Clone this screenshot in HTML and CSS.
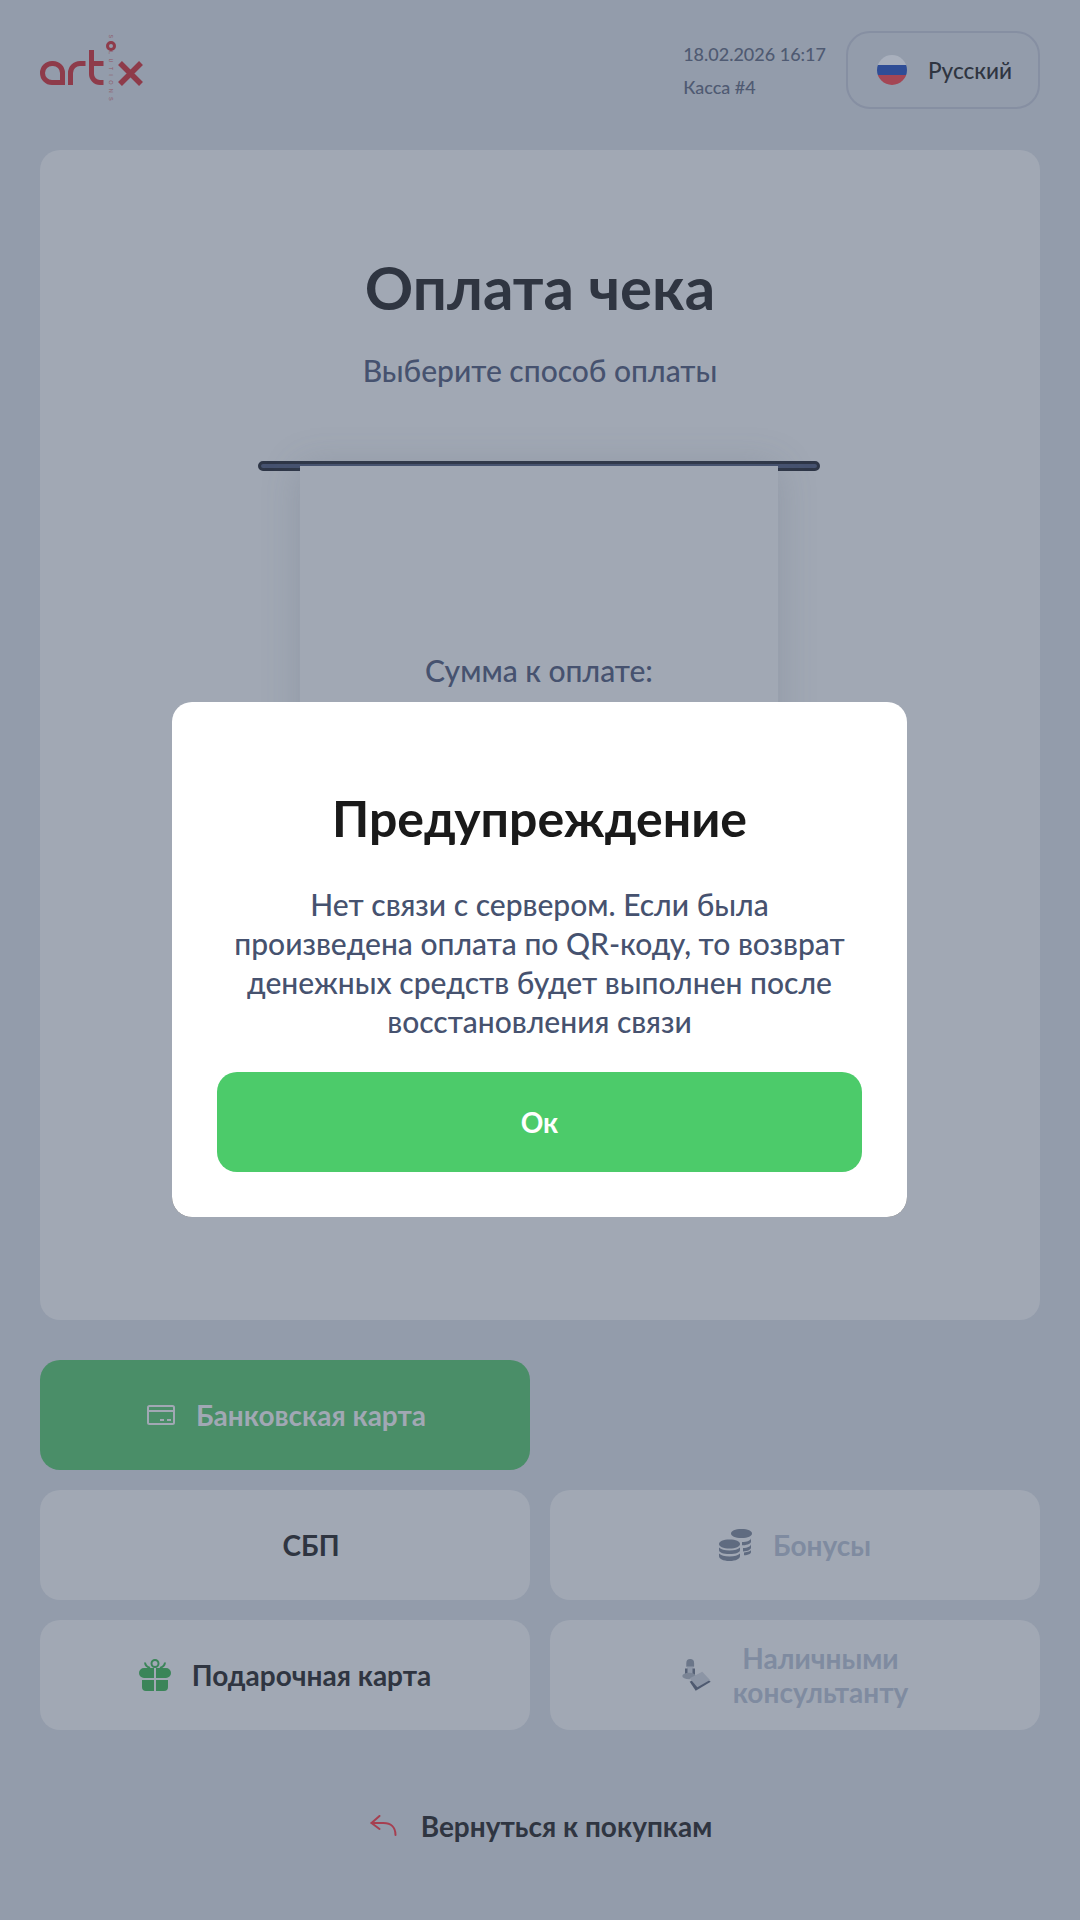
FILE: index.html
```html
<!DOCTYPE html>
<html lang="ru">
<head>
<meta charset="utf-8">
<title>Оплата чека</title>
<link rel="stylesheet" href="styles.css">
</head>
<body>
<div class="page">
  <header class="header">
    <svg class="logo" width="106" height="74" viewBox="0 0 106 74" aria-label="artx solutions">
      <text class="logo-sub" transform="translate(69 0.500) rotate(90)">SOLUTIONS</text>
      <g fill="none" stroke="#8E3B4A" stroke-width="5">
        <path d="M22.500 51V39a9.500 9.500 0 0 0-9.500-9.500h-1a9.500 9.500 0 0 0 0 19h10.500"/>
        <path d="M30.500 51V39a9.500 9.500 0 0 1 9.500-9.500h5.500"/>
        <path d="M51.500 16v24a8.500 8.500 0 0 0 8.500 8.500h3.500M51.500 29.500h12"/>
        <circle cx="71" cy="12" r="3.500" stroke-width="3" fill="#939CAB"/>
        <path d="M80 29l21 21M101 29L80 50" stroke-width="5.500"/>
      </g>
    </svg>
    <div class="header-right">
      <div class="meta">
        <div>18.02.2026 16:17</div>
        <div>Касса #4</div>
      </div>
      <div class="lang">
        <svg class="flag" width="30" height="30" viewBox="0 0 30 30">
          <clipPath id="flag-clip"><circle cx="15" cy="15" r="15"/></clipPath>
          <g clip-path="url(#flag-clip)">
            <rect width="30" height="10" fill="#A9B0BD"/>
            <rect y="10" width="30" height="10" fill="#2F4D96"/>
            <rect y="20" width="30" height="10" fill="#A44654"/>
          </g>
        </svg>
        <span>Русский</span>
      </div>
    </div>
  </header>

  <main class="card">
    <h1 class="title">Оплата чека</h1>
    <p class="subtitle">Выберите способ оплаты</p>
    <div class="printer"></div>
    <div class="receipt">
      <div class="receipt-label">Сумма к оплате:</div>
    </div>
  </main>

  <section class="pay-grid">
    <div class="pay pay-active">
      <svg width="28" height="20" viewBox="0 0 28 20" fill="none" stroke="#A1A8B4" stroke-width="2">
        <rect x="1" y="1" width="26" height="18" rx="1.500"/>
        <path d="M1 6h26M13 15h4M20 15h4"/>
      </svg>
      <span class="pay-label">Банковская карта</span>
    </div>
    <div class="pay-empty"></div>
    <div class="pay"><span class="pay-label-noicon">СБП</span></div>
    <div class="pay pay-disabled">
      <svg width="33" height="32" viewBox="0 0 33 32" fill="#5F6B80">
        <path d="M12 4.500C12 2 16 0 22.500 0S33 2 33 4.500 29 9 22.500 9 12 7 12 4.500z"/>
        <path d="M32 9v3.500c0 2-3 3.500-8 3.800l-1-.1V13c5 0 9-1.500 9-4zM32 15v3.500c0 2-3 3.800-8 4V19c5 0 8-2 8-4zM32 21v2c0 1.800-2.500 3-7 3.300v-2.800c4-.5 7-1.500 7-2.500z"/>
        <path d="M0 15c0-2.500 4-4.500 10.500-4.500S21 12.500 21 15s-4 4.500-10.500 4.500S0 17.500 0 15z"/>
        <path d="M0 18.500c2 2 5.500 3 10.500 3s8.500-1 10.500-3V21c0 2.500-4 4-10.500 4S0 23.500 0 21zM0 24.500c2 2 5.500 3 10.500 3s8.500-1 10.500-3V27c0 2.800-4 5-10.500 5S0 29.800 0 27z"/>
      </svg>
      <span class="pay-label">Бонусы</span>
    </div>
    <div class="pay">
      <svg width="32" height="32" viewBox="0 0 32 32" fill="#3B8559">
        <path d="M5 9h10v10H5a5 5 0 0 1 0-10zM17 9h10a5 5 0 0 1 0 10H17z"/>
        <path d="M3 21h12v11H7a4 4 0 0 1-4-4zM17 21h12v7a4 4 0 0 1-4 4h-8z"/>
        <g fill="none" stroke="#3B8559" stroke-width="2">
          <circle cx="16" cy="4.500" r="3.500"/>
          <path d="M6 3.500c.3 3 2 4.500 5 5.500M26 3.500c-.3 3-2 4.500-5 5.500"/>
        </g>
      </svg>
      <span class="pay-label">Подарочная карта</span>
    </div>
    <div class="pay pay-disabled">
      <svg width="30" height="33" viewBox="0 0 30 33">
        <path d="M4.300 7.700V4a3.900 4 0 0 1 7.800 0v3.700z" fill="#6B7689"/>
        <rect x="5" y="7.700" width="6.500" height="7" fill="#8F98A8"/>
        <path d="M3 9.500h2.500v6.500H3zM10.500 9.500H13v6.500h-2.500z" fill="#566176"/>
        <ellipse cx="7" cy="17" rx="6.700" ry="3.300" fill="#7A8495"/>
        <path d="M7.700 22.700L20.300 16 28.700 22.700 13.700 31.700z" fill="#4F5A70"/>
        <path d="M7.700 19.300L20.300 12.700 28 21 15.300 28.300z" fill="#8C95A5"/>
      </svg>
      <span class="pay-label">Наличными<br>консультанту</span>
    </div>
  </section>

  <div class="back">
    <svg width="28" height="22" viewBox="0 0 28 22" fill="none" stroke="#A63F50" stroke-width="2" stroke-linecap="round" stroke-linejoin="round">
      <path d="M9.500 1L1.500 8l8 6"/>
      <path d="M1.500 8h12c7 0 12 4 12 12"/>
    </svg>
    <span>Вернуться к покупкам</span>
  </div>
</div>

<div class="overlay">
  <div class="modal">
    <h2 class="modal-title">Предупреждение</h2>
    <p class="modal-text">Нет связи с сервером. Если была произведена оплата по QR-коду, то возврат денежных средств будет выполнен после восстановления связи</p>
    <div class="modal-btn">Ок</div>
  </div>
</div>
</body>
</html>
```
FILE: styles.css
```css
* { box-sizing: border-box; }
html, body { margin: 0; padding: 0; }
body {
  width: 1080px;
  height: 1920px;
  background: #939CAB;
  font-family: "Lato", "Noto Sans", sans-serif;
  overflow: hidden;
}
.page {
  padding: 0 40px;
  display: flex;
  flex-direction: column;
}
.header {
  height: 150px;
  padding-top: 31px;
  display: flex;
  justify-content: space-between;
  align-items: flex-start;
}
.logo { display: block; margin-top: 3px; overflow: visible; }
.logo-sub {
  font-family: "Liberation Sans", sans-serif;
  font-size: 5.500px;
  letter-spacing: 4.300px;
  fill: #8E3B4A;
  opacity: 0.7;
}
.header-right {
  display: flex;
  align-items: flex-start;
  gap: 20px;
}
.meta {
  padding-top: 7px;
  font-size: 18px;
  font-weight: 500;
  line-height: 33px;
  color: #4F5A72;
}
.lang {
  width: 194px;
  height: 78px;
  border: 2px solid #868FA2;
  border-radius: 24px;
  display: flex;
  align-items: center;
  padding-left: 29px;
  gap: 21px;
  font-size: 22.500px;
  font-weight: 500;
  color: #2F3541;
}
.flag { display: block; flex: none; }
.card {
  height: 1170px;
  background: #A1A8B4;
  border-radius: 20px;
  display: flex;
  flex-direction: column;
  align-items: center;
  padding-top: 98px;
}
.title {
  margin: 0;
  font-size: 60px;
  line-height: 78px;
  font-weight: 700;
  color: #2F3541;
}
.subtitle {
  margin: 26px 0 0;
  font-size: 30px;
  font-weight: 500;
  line-height: 36px;
  color: #46526F;
}
.printer {
  margin: 73px 2px 0 0;
  width: 562px;
  height: 10px;
  background: #46526F;
  border: 3px solid #2E3647;
  border-radius: 5px;
  flex: none;
}
.receipt {
  margin: -5px 2px 0 0;
  width: 478px;
  height: 640px;
  background: #A1A8B4;
  box-shadow: 0 0 36px rgba(84, 94, 114, 0.22);
  position: relative;
  padding-top: 186px;
  text-align: center;
  font-size: 30px;
  font-weight: 500;
  line-height: 36px;
  color: #46526F;
}
.pay-grid {
  margin-top: 40px;
  display: grid;
  grid-template-columns: 490px 490px;
  grid-auto-rows: 110px;
  gap: 20px;
}
.pay {
  background: #A1A8B4;
  border-radius: 20px;
  display: flex;
  align-items: center;
  justify-content: center;
  font-size: 28px;
  font-weight: 700;
  line-height: 34px;
  color: #2F3541;
  text-align: center;
}
.pay svg { flex: none; display: block; }
.pay-active { background: #4A8E68; color: #A1A8B4; padding-left: 3px; }
.pay-disabled { color: #7F8BA0; }
.pay-label { margin-left: 21px; }
.pay-label-noicon { margin-left: 52px; }
.back {
  margin-top: 78px;
  padding-left: 2px;
  display: flex;
  align-items: center;
  justify-content: center;
  gap: 23px;
  font-size: 28px;
  font-weight: 700;
  line-height: 36px;
  color: #2F3541;
}
.overlay {
  position: fixed;
  inset: 0;
  padding: 0 1px 1px 0;
  display: flex;
  align-items: center;
  justify-content: center;
}
.modal {
  position: relative;
  width: 735px;
  padding: 45px;
  background: #fff;
  border-radius: 20px;
  text-align: center;
}
.modal::before {
  content: "";
  position: absolute;
  left: 0;
  right: 0;
  bottom: 0;
  height: 30px;
  background: #2a2a2a;
  border-radius: 0 0 20px 20px;
  z-index: -1;
}
.modal-title {
  margin: 0;
  padding-top: 41px;
  font-size: 50px;
  line-height: 60px;
  font-weight: 700;
  color: #1A1A1A;
}
.modal-text {
  margin: 37px 13px 0;
  font-size: 30px;
  font-weight: 500;
  line-height: 39px;
  color: #46526F;
}
.modal-btn {
  margin-top: 31px;
  height: 100px;
  background: #4CCB6A;
  border-radius: 20px;
  display: flex;
  align-items: center;
  justify-content: center;
  font-size: 28px;
  font-weight: 700;
  color: #fff;
}
```
